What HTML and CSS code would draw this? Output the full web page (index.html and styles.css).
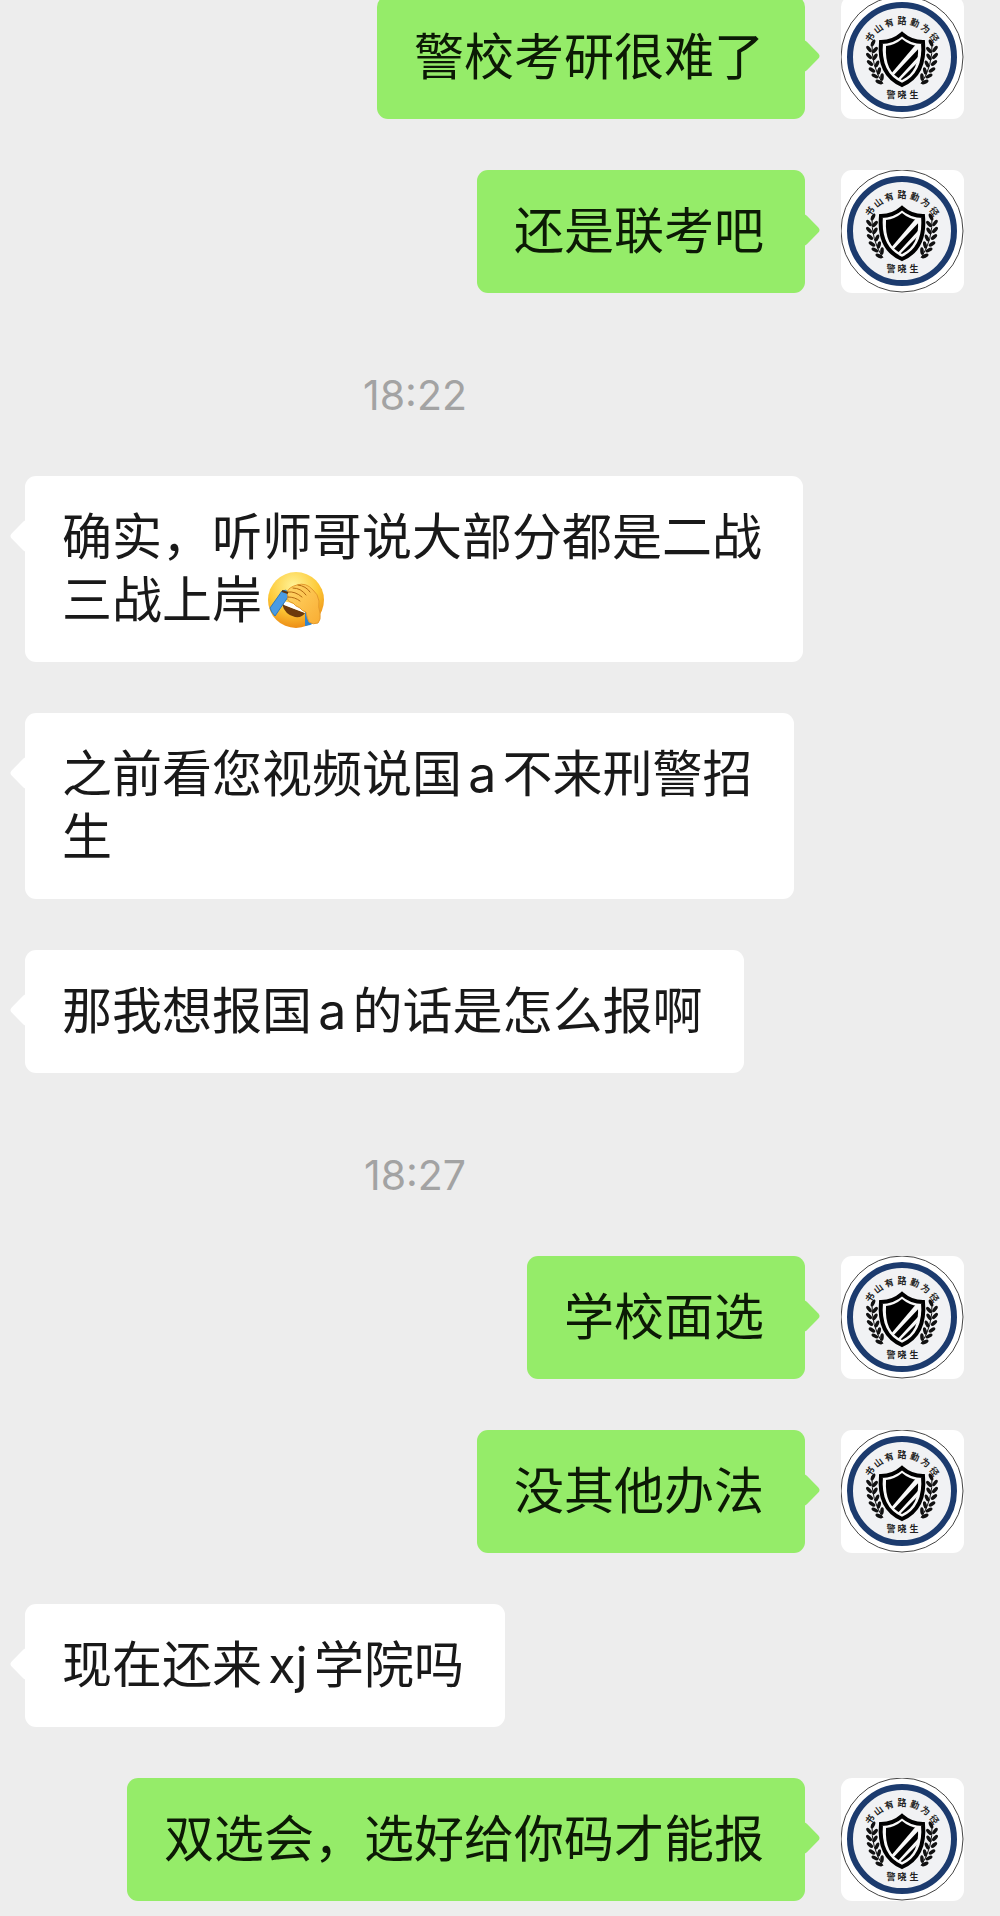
FILE: index.html
```html
<!DOCTYPE html>
<html lang="zh-CN">
<head>
	<meta charset="UTF-8">
	<meta name="viewport" content="width=device-width, initial-scale=1.0">
	<title>聊天</title>
	<link rel="stylesheet" href="styles.css">
</head>
<body>
	<main class="chat">
		<div class="message mine">
			<div class="bubble">警校考研很难了</div>
			<!-- the other avatars reuse this drawing -->
			<svg class="avatar" viewBox="0 0 123 123" role="img" aria-label="警晓生">
				<defs>
					<clipPath id="shield-inner">
						<path d="M61 43Q68 49 77 50C78 68 73 78 61 84C49 78 44 68 45 50Q54 49 61 43Z"/>
					</clipPath>
				</defs>
				<g id="avatar">
					<rect width="123" height="123" fill="#fff"/>
					<circle cx="61" cy="61" r="61" fill="#fff" stroke="#444" stroke-width="1"/>
					<circle cx="61" cy="61" r="52" fill="#f1f2f4" stroke="#1c3b6e" stroke-width="6"/>
					<g class="badge-text">
						<text x="61" y="28" transform="rotate(-55 61 64)">书</text>
						<text x="61" y="28" transform="rotate(-37 61 64)">山</text>
						<text x="61" y="28" transform="rotate(-19 61 64)">有</text>
						<text x="61" y="28">路</text>
						<text x="61" y="28" transform="rotate(19 61 64)">勤</text>
						<text x="61" y="28" transform="rotate(37 61 64)">为</text>
						<text x="61" y="28" transform="rotate(55 61 64)">径</text>
						<text x="50" y="102">警</text>
						<text x="61" y="102">晓</text>
						<text x="73" y="102">生</text>
					</g>
					<g id="laurel" fill="#111">
						<path d="M31 46Q30 70 42 88" fill="none" stroke="#111" stroke-width="1"/>
						<ellipse cx="32" cy="47" rx="1.8" ry="3.8" transform="rotate(25 32 47)"/>
						<ellipse cx="28" cy="53" rx="1.8" ry="3.8" transform="rotate(-38 28 53)"/>
						<ellipse cx="34" cy="54" rx="1.8" ry="3.8" transform="rotate(42 34 54)"/>
						<ellipse cx="28" cy="60" rx="1.8" ry="3.8" transform="rotate(-44 28 60)"/>
						<ellipse cx="34" cy="61" rx="1.8" ry="3.8" transform="rotate(34 34 61)"/>
						<ellipse cx="29" cy="67" rx="1.8" ry="3.8" transform="rotate(-50 29 67)"/>
						<ellipse cx="36" cy="68" rx="1.8" ry="3.8" transform="rotate(24 36 68)"/>
						<ellipse cx="31" cy="74" rx="1.8" ry="3.8" transform="rotate(-56 31 74)"/>
						<ellipse cx="38" cy="75" rx="1.8" ry="3.8" transform="rotate(14 38 75)"/>
						<ellipse cx="34" cy="80" rx="1.8" ry="3.8" transform="rotate(-62 34 80)"/>
						<ellipse cx="41" cy="81" rx="1.8" ry="3.8" transform="rotate(4 41 81)"/>
						<ellipse cx="38" cy="86" rx="1.8" ry="3.8" transform="rotate(-66 38 86)"/>
					</g>
					<use href="#laurel" transform="translate(122 0) scale(-1 1)"/>
					<path d="M61 38Q70 46 82 46C84 68 77 82 61 89C45 82 38 68 40 46Q52 46 61 38Z" fill="#f8f8f8" stroke="#000" stroke-width="4"/>
					<g clip-path="url(#shield-inner)">
						<path d="M40 40H82L49 79L40 80Z"/>
						<path d="M84 46L50 82L54 86L86 51ZM86 57L57 86L62 88L86 64Z"/>
					</g>
				</g>
			</svg>
		</div>
		<div class="message mine">
			<div class="bubble">还是联考吧</div>
			<svg class="avatar" viewBox="0 0 123 123" role="img" aria-label="警晓生"><use href="#avatar"/></svg>
		</div>

		<time class="time">18:22</time>

		<div class="message">
			<div class="bubble">确实，听师哥说大部分都是二战<br>三战上岸<svg class="emoji" viewBox="0 0 57 57" role="img" aria-label="捂脸">
				<defs>
					<radialGradient id="face" cx="45%" cy="25%" r="75%">
						<stop offset="0" stop-color="#fff397"/>
						<stop offset="0.6" stop-color="#fdc936"/>
						<stop offset="1" stop-color="#ed8d16"/>
					</radialGradient>
					<linearGradient id="hand" x1="0" y1="0" x2="1" y2="1">
						<stop offset="0" stop-color="#ffd667"/>
						<stop offset="1" stop-color="#f9ad33"/>
					</linearGradient>
				</defs>
				<circle cx="28" cy="28" r="28" fill="url(#face)"/>
				<path d="M14 32Q27 37 37 41Q34 46 27 45Q17 43 14 32Z" fill="#6d3a0c"/>
				<path d="M15 29Q26 31 38 38L37 41Q26 37 16 33Z" fill="#fff"/>
				<path d="M14 19Q18 17 20 20L20 25L7 44Q3 40 2 36Z" fill="#4a9be4" stroke="#2d79bd" stroke-width="1"/>
				<path d="M37 40L37 54Q42 54 46 51L41 41Z" fill="#2f84cf"/>
				<path d="M19 20Q21 15 29 13Q38 10 45 18Q50 22 51 29Q50 35 52 41Q53 48 50 51Q45 53 41 50Q39 46 38 40Q34 39 32 36Q27 34 25 31Q18 29 20 25Z" fill="url(#hand)" stroke="#e59a2c" stroke-width="1"/>
				<path d="M20 20Q27 19 34 25M25 16Q33 16 38 23M30 13Q38 14 42 20M20 25Q27 25 32 29" fill="none" stroke="#b56a13" stroke-width="1" stroke-linecap="round"/>
				<path d="M14 19L20 21" stroke="#5b3713" stroke-width="2"/>
			</svg></div>
		</div>
		<div class="message">
			<div class="bubble">之前看您视频说国a不来刑警招<br>生</div>
		</div>
		<div class="message">
			<div class="bubble">那我想报国a的话是怎么报啊</div>
		</div>

		<time class="time">18:27</time>

		<div class="message mine">
			<div class="bubble">学校面选</div>
			<svg class="avatar" viewBox="0 0 123 123" role="img" aria-label="警晓生"><use href="#avatar"/></svg>
		</div>
		<div class="message mine">
			<div class="bubble">没其他办法</div>
			<svg class="avatar" viewBox="0 0 123 123" role="img" aria-label="警晓生"><use href="#avatar"/></svg>
		</div>
		<div class="message">
			<div class="bubble">现在还来xj学院吗</div>
		</div>
		<div class="message mine">
			<div class="bubble">双选会，选好给你码才能报</div>
			<svg class="avatar" viewBox="0 0 123 123" role="img" aria-label="警晓生"><use href="#avatar"/></svg>
		</div>
	</main>
</body>
</html>
```
FILE: styles.css
```css
body {
	margin: 0;
	background: #ededed;
	color: #191919;
	font-family: Inter, "Noto Sans CJK SC", sans-serif;
}

/* the list is scrolled slightly past its first message */
.chat {
	display: flex;
	flex-direction: column;
	gap: 51px;
	margin-top: -4px;
	padding: 0 36px 15px 25px;
}

.message {
	display: flex;
	align-items: flex-start;
	gap: 36px;
}

.mine {
	justify-content: flex-end;
}

.bubble {
	position: relative;
	padding: 30px 41px 30px 37px;
	border-radius: 11px;
	background: #fff;
	font-size: 50px;
	line-height: 63px;
	text-autospace: normal;
}

.mine .bubble {
	background: #95ec69;
	color: #0c1a05;
}

/* bubble tail */
.bubble::before {
	content: "";
	position: absolute;
	top: 48px;
	left: -11px;
	width: 24px;
	height: 24px;
	border-radius: 4px;
	background: inherit;
	transform: rotate(45deg);
}

.mine .bubble::before {
	left: auto;
	right: -11px;
}

.avatar {
	flex: none;
	width: 123px;
	height: 123px;
	border-radius: 11px;
}

.badge-text {
	font-size: 9px;
	font-weight: bold;
	text-anchor: middle;
	fill: #222;
}

.emoji {
	width: 57px;
	height: 57px;
	margin: 3px 0 0 6px;
	vertical-align: top;
}

.time {
	padding: 22px 134px 0 0;
	margin-left: -25px;
	color: #a3a3a3;
	font-size: 41px;
	line-height: 59px;
	text-align: center;
}
```
